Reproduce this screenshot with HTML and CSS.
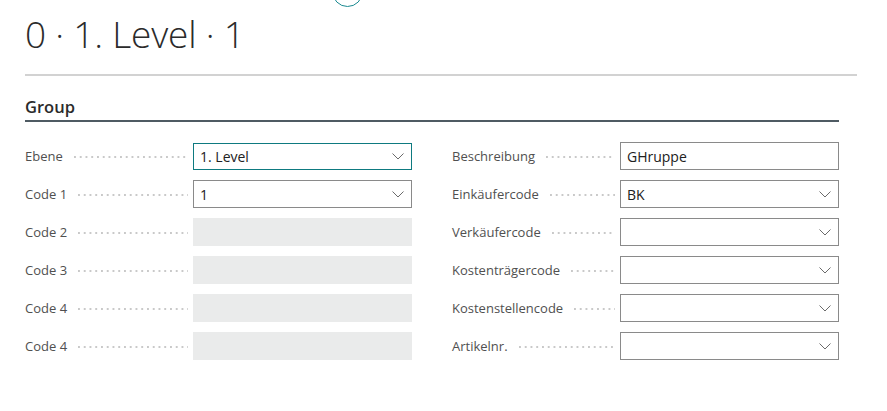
FILE: index.html
```html
<!DOCTYPE html>
<html lang="de">
<head>
<meta charset="utf-8">
<title>0 · 1. Level · 1</title>
<link rel="stylesheet" href="styles.css">
</head>
<body>
<div class="page">
  <span class="top-button"></span>
  <h1 class="title">0 · 1. Level · 1</h1>
  <div class="divider"></div>
  <section class="group">
    <h2 class="group-title">Group</h2>
    <div class="grid">
      <div class="col">
        <div class="field">
          <span class="label">Ebene</span><span class="leader"></span>
          <div class="input focused"><span class="value">1. Level</span><svg class="chev" viewBox="0 0 12 7"><path d="M0.5 0.5 L6 6 L11.5 0.5"/></svg></div>
        </div>
        <div class="field">
          <span class="label">Code 1</span><span class="leader"></span>
          <div class="input"><span class="value">1</span><svg class="chev" viewBox="0 0 12 7"><path d="M0.5 0.5 L6 6 L11.5 0.5"/></svg></div>
        </div>
        <div class="field">
          <span class="label">Code 2</span><span class="leader"></span>
          <div class="input disabled"></div>
        </div>
        <div class="field">
          <span class="label">Code 3</span><span class="leader"></span>
          <div class="input disabled"></div>
        </div>
        <div class="field">
          <span class="label">Code 4</span><span class="leader"></span>
          <div class="input disabled"></div>
        </div>
        <div class="field">
          <span class="label">Code 4</span><span class="leader"></span>
          <div class="input disabled"></div>
        </div>
      </div>
      <div class="col">
        <div class="field">
          <span class="label">Beschreibung</span><span class="leader"></span>
          <div class="input"><span class="value">GHruppe</span></div>
        </div>
        <div class="field">
          <span class="label">Einkäufercode</span><span class="leader"></span>
          <div class="input"><span class="value">BK</span><svg class="chev" viewBox="0 0 12 7"><path d="M0.5 0.5 L6 6 L11.5 0.5"/></svg></div>
        </div>
        <div class="field">
          <span class="label">Verkäufercode</span><span class="leader"></span>
          <div class="input"><span class="value"></span><svg class="chev" viewBox="0 0 12 7"><path d="M0.5 0.5 L6 6 L11.5 0.5"/></svg></div>
        </div>
        <div class="field">
          <span class="label">Kostenträgercode</span><span class="leader"></span>
          <div class="input"><span class="value"></span><svg class="chev" viewBox="0 0 12 7"><path d="M0.5 0.5 L6 6 L11.5 0.5"/></svg></div>
        </div>
        <div class="field">
          <span class="label">Kostenstellencode</span><span class="leader"></span>
          <div class="input"><span class="value"></span><svg class="chev" viewBox="0 0 12 7"><path d="M0.5 0.5 L6 6 L11.5 0.5"/></svg></div>
        </div>
        <div class="field">
          <span class="label">Artikelnr.</span><span class="leader"></span>
          <div class="input"><span class="value"></span><svg class="chev" viewBox="0 0 12 7"><path d="M0.5 0.5 L6 6 L11.5 0.5"/></svg></div>
        </div>
      </div>
    </div>
  </section>
</div>
</body>
</html>
```
FILE: styles.css
```css
html, body {
  margin: 0;
  padding: 0;
  background: #ffffff;
}
body {
  font-family: "Open Sans", "Noto Sans", "Liberation Sans", sans-serif;
  color: #212121;
}
.page {
  position: relative;
  padding: 0 0 0 25px;
}
.top-button {
  position: absolute;
  left: 332px;
  top: -24px;
  width: 29px;
  height: 29px;
  border: 1.5px solid #1b8a91;
  border-radius: 50%;
}
.title {
  margin: 0;
  padding-top: 10px;
  font-size: 37px;
  line-height: 48px;
  font-weight: 300;
  color: #2b2b2b;
  letter-spacing: -0.2px;
}
.divider {
  margin-top: 16px;
  width: 832px;
  height: 2px;
  background: #d2d2d2;
}
.group {
  width: 814px;
}
.group-title {
  margin: 20px 0 0 0;
  font-size: 16.5px;
  line-height: 22px;
  font-weight: 600;
  color: #2b2b2b;
  padding-bottom: 2px;
  border-bottom: 2px solid #4f5b63;
}
.grid {
  display: grid;
  grid-template-columns: 387px 387px;
  column-gap: 40px;
  margin-top: 20px;
}
.col {
  display: flex;
  flex-direction: column;
  gap: 10px;
}
.field {
  display: flex;
  align-items: center;
  height: 28px;
}
.label {
  font-size: 13px;
  color: #505050;
  white-space: nowrap;
  padding-right: 11px;
}
.leader {
  flex: 1;
  height: 2px;
  margin-right: 5px;
  margin-top: 2px;
  background-image: linear-gradient(to right, #c9c9c9 1.6px, transparent 1.6px);
  background-size: 5.75px 2px;
  background-repeat: repeat-x;
  background-position: left center;
}
.input {
  box-sizing: border-box;
  width: 219px;
  height: 28px;
  border: 1px solid #8a8a8a;
  display: flex;
  align-items: center;
  padding: 0 6px 0 6px;
  background: #fff;
}
.input.focused {
  border-color: #0e7a80;
  height: 27px;
}
.input.disabled {
  border: none;
  background: #eaebeb;
}
.value {
  flex: 1;
  font-size: 14px;
  color: #212121;
}
.chev {
  width: 12px;
  height: 7px;
  margin-right: 1px;
}
.chev path {
  fill: none;
  stroke: #6b6b6b;
  stroke-width: 1;
}
```
